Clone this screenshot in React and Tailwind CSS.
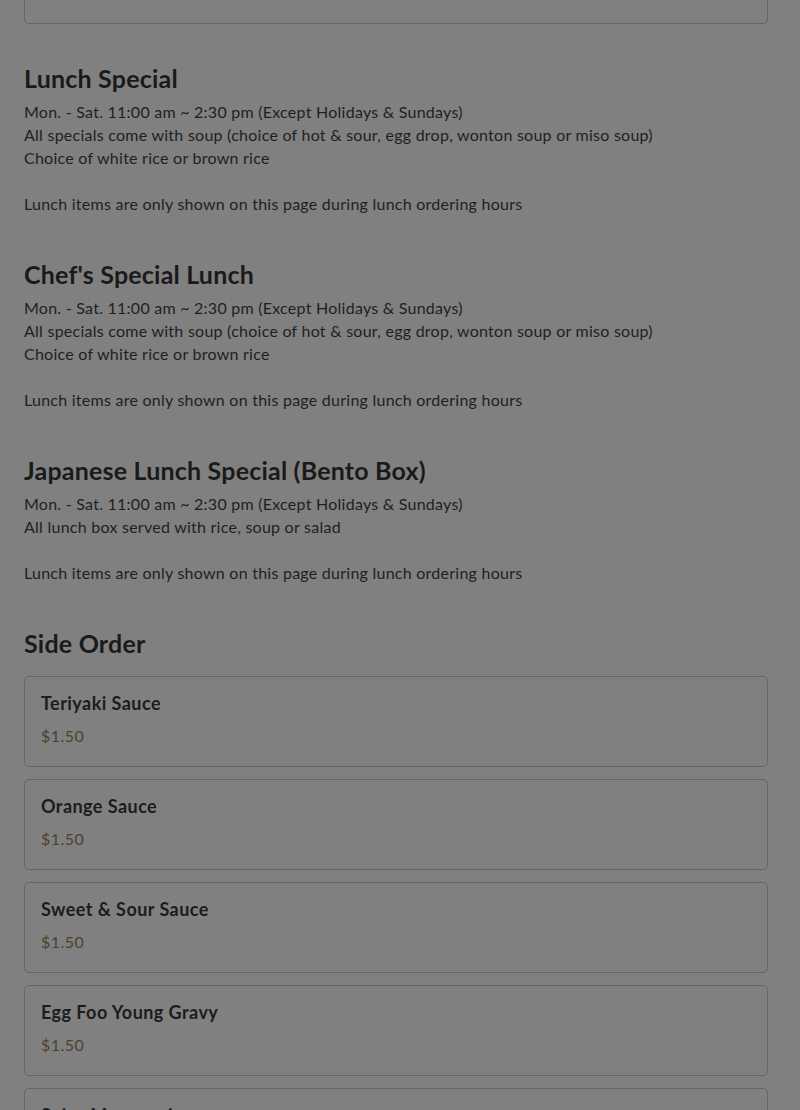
import React from "react";

const lunchLine = "Mon. - Sat. 11:00 am ~ 2:30 pm (Except Holidays & Sundays)";
const soup = "All specials come with soup (choice of hot & sour, egg drop, wonton soup or miso soup)";

const sections = [
  { title: "Lunch Special", lines: [lunchLine, soup, "Choice of white rice or brown rice"] },
  { title: "Chef's Special Lunch", lines: [lunchLine, soup, "Choice of white rice or brown rice"] },
  { title: "Japanese Lunch Special (Bento Box)", lines: [lunchLine, "All lunch box served with rice, soup or salad"] },
];

const sides = ["Teriyaki Sauce", "Orange Sauce", "Sweet & Sour Sauce", "Egg Foo Young Gravy", "Spicy Mayonnaise"];

function Card({ name, price }) {
  return (
    <div className="h-[91px] rounded-[5px] border border-[#666666] px-4 pt-[14px]">
      <div className="text-[18px] leading-[24px] font-bold tracking-[0.45px] text-[#1c1c1c]">{name}</div>
      <div className="mt-[10px] text-[16px] leading-[22px] tracking-[0.5px] text-[#4f402d]">{price}</div>
    </div>
  );
}

export default function App() {
  return (
    <div className="h-[1110px] overflow-hidden bg-[#808080] pl-6 pr-8" style={{ fontFamily: "Lato, 'Noto Sans', sans-serif" }}>
      <div className="-mt-[67px]">
        <Card name="Pad Thai" price="$15.00" />
      </div>
      {sections.map((s) => (
        <div key={s.title} className="pt-[40px] pb-[5px]">
          <h2 className="text-[25px] leading-[28px] font-bold tracking-[0.2px] text-[#1a1a1a]">{s.title}</h2>
          <div className="mt-2 text-[16px] leading-[23px] tracking-[0.25px] text-[#1f1f1f]">
            {s.lines.map((l) => (
              <div key={l}>{l}</div>
            ))}
            <div className="h-[23px]" />
            <div>Lunch items are only shown on this page during lunch ordering hours</div>
          </div>
        </div>
      ))}
      <div className="pt-[40px]">
        <h2 className="text-[25px] leading-[28px] font-bold tracking-[0.2px] text-[#1a1a1a]">Side Order</h2>
        <div className="mt-[19px] flex flex-col gap-[12px]">
          {sides.map((n) => (
            <Card key={n} name={n} price="$1.50" />
          ))}
        </div>
      </div>
    </div>
  );
}
